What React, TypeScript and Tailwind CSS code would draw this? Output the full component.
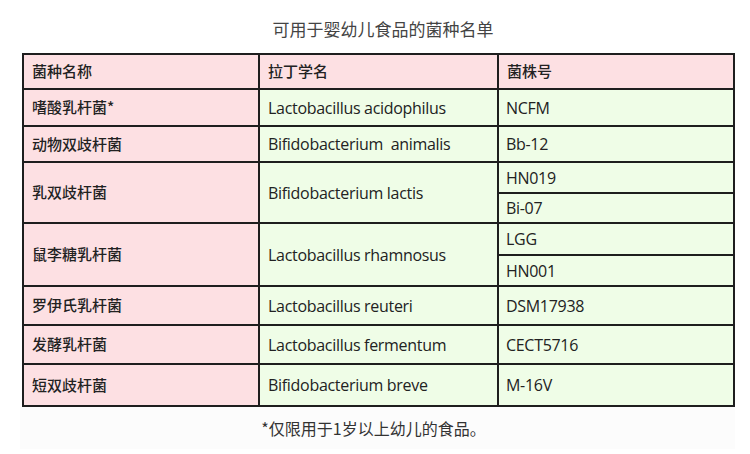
const rows: { cn: string; latin: string; strains: string[]; h: number[] }[] = [
  { cn: "嗜酸乳杆菌*", latin: "Lactobacillus acidophilus", strains: ["NCFM"], h: [37] },
  { cn: "动物双歧杆菌", latin: "Bifidobacterium  animalis", strains: ["Bb-12"], h: [36] },
  { cn: "乳双歧杆菌", latin: "Bifidobacterium lactis", strains: ["HN019", "Bi-07"], h: [31, 30] },
  { cn: "鼠李糖乳杆菌", latin: "Lactobacillus rhamnosus", strains: ["LGG", "HN001"], h: [32, 31] },
  { cn: "罗伊氏乳杆菌", latin: "Lactobacillus reuteri", strains: ["DSM17938"], h: [39] },
  { cn: "发酵乳杆菌", latin: "Lactobacillus fermentum", strains: ["CECT5716"], h: [39] },
  { cn: "短双歧杆菌", latin: "Bifidobacterium breve", strains: ["M-16V"], h: [42] },
];

const cjk = "font-['Noto_Sans_CJK_SC',sans-serif]";
const latin = "font-['Open_Sans','Noto_Sans_CJK_SC',sans-serif] tracking-[-0.3px]";

export default function App() {
  return (
    <div className="w-[750px] h-[454px] bg-white text-[#222]">
      <div className={`${cjk} pt-[16px] h-[53px] text-center text-[17px] text-[#444] pl-[16px]`}>
        可用于婴幼儿食品的菌种名单
      </div>
      <div className="pl-[22px]">
        <table className="border-collapse border-2 border-[#1e1e1e] w-[711px] table-fixed">
          <colgroup>
            <col className="w-[236px]" />
            <col className="w-[239px]" />
            <col className="w-[236px]" />
          </colgroup>
          <tbody>
            <tr className="h-[35px] bg-[#fde0e3]">
              <td className={`${cjk} border-2 border-[#1e1e1e] px-[8px] text-[15px] font-medium`}>菌种名称</td>
              <td className={`${cjk} border-2 border-[#1e1e1e] px-[8px] text-[15px] font-medium`}>拉丁学名</td>
              <td className={`${cjk} border-2 border-[#1e1e1e] px-[8px] text-[15px] font-medium`}>菌株号</td>
            </tr>
            {rows.map((r) =>
              r.strains.map((s, i) => (
                <tr key={r.cn + s} style={{ height: r.h[i] }}>
                  {i === 0 && (
                    <>
                      <td
                        rowSpan={r.strains.length}
                        className={`${cjk} border-2 border-[#1e1e1e] bg-[#fde0e3] px-[8px] text-[15px] font-medium`}
                      >
                        {r.cn}
                      </td>
                      <td
                        rowSpan={r.strains.length}
                        className={`${latin} border-2 border-[#1e1e1e] bg-[#effde7] px-[8px] text-[16px] whitespace-pre`}
                      >
                        {r.latin}
                      </td>
                    </>
                  )}
                  <td className={`${latin} border-2 border-[#1e1e1e] bg-[#effde7] px-[7px] text-[16px]`}>{s}</td>
                </tr>
              ))
            )}
          </tbody>
        </table>
      </div>
      <div className="mx-[20px] mr-[15px] h-[42px] bg-[#fcfcfc] flex items-center justify-center">
        <span className={`${cjk} text-[16px] text-[#333] pr-[8px]`}>*仅限用于1岁以上幼儿的食品。</span>
      </div>
    </div>
  );
}
